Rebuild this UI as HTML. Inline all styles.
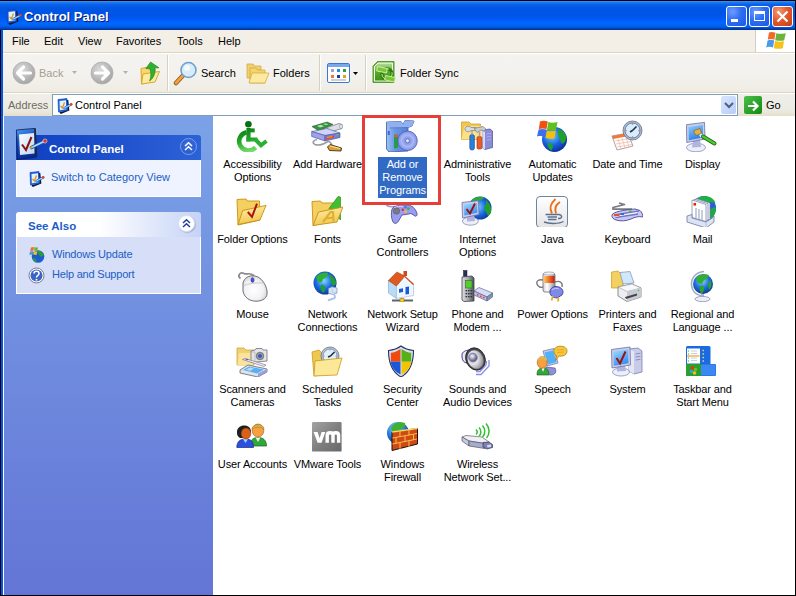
<!DOCTYPE html>
<html><head><meta charset="utf-8">
<style>
*{box-sizing:border-box;margin:0;padding:0}
html,body{width:796px;height:596px;overflow:hidden;background:#000;font-family:"Liberation Sans",sans-serif;font-size:11px;color:#000}
.a{position:absolute}
#title{left:0;top:1px;width:796px;height:29px;background:linear-gradient(to bottom,#3d95ff 0%,#1a78f5 5%,#0a62ea 12%,#0057e3 25%,#0054e5 40%,#0055eb 55%,#005df7 66%,#0266fe 76%,#0062ef 86%,#0052d6 92%,#0040ab 96%,#003092 100%)}
.ttl{left:24px;top:9px;color:#fff;font-weight:bold;font-size:13px;text-shadow:1px 1px 0 #0a1e6e}
.tb{top:6px;width:21px;height:21px;border:1px solid #fff;border-radius:3px;background:radial-gradient(circle at 30% 25%,#6c9cff 0%,#2e6ef3 45%,#1c58e0 100%)}
.tb.cl{background:radial-gradient(circle at 30% 25%,#f29a77 0%,#e25a30 45%,#c83c14 100%)}
#menu{left:3px;top:30px;width:792px;height:22px;background:#f3efe6}
.mi{top:35px}
#tool{left:3px;top:54px;width:792px;height:38px;background:linear-gradient(to bottom,#f5f3f0 0%,#f4f2ee 50%,#eeece2 100%)}
#addr{left:3px;top:94px;width:792px;height:22px;background:linear-gradient(to bottom,#efeee9 0%,#ecebe3 70%,#e6dfcc 100%)}
#side{left:4px;top:116px;width:209px;height:479px;background:linear-gradient(to bottom,#7ba2e7 0%,#6375d6 100%)}
#main{left:213px;top:116px;width:582px;height:479px;background:#fff}
.lbl{position:absolute;width:75px;text-align:center;line-height:13px;font-size:11px;letter-spacing:-0.12px}
.ic{position:absolute;width:32px;height:32px}
</style></head><body>
<div class="a" style="left:1px;top:1px;width:2px;height:594px;background:#0055ea"></div>
<div class="a" style="left:3px;top:116px;width:1px;height:479px;background:#fff"></div>
<div id="title" class="a"></div>
<div class="a ttl">Control Panel</div>
<div class="a tb" style="left:726px"></div>
<div class="a tb" style="left:749px"></div>
<div class="a tb cl" style="left:772px"></div>
<div id="menu" class="a"></div>
<div class="a" style="left:3px;top:52px;width:792px;height:1px;background:#dcd5c2"></div><div class="a" style="left:3px;top:53px;width:792px;height:1px;background:#fff"></div>
<div id="tool" class="a"></div>
<div class="a" style="left:3px;top:92px;width:792px;height:1px;background:#dcd5c2"></div><div class="a" style="left:3px;top:93px;width:792px;height:1px;background:#fff"></div>
<div id="addr" class="a"></div>

<!-- title icon -->
<svg class="a" style="left:5px;top:8px" width="17" height="17" viewBox="0 0 17 17">
<path d="M11.5 3 L12.5 13 L5 16 L4 15" stroke="#101828" stroke-width="1.6" fill="none"/>
<path d="M2 2.5 L11 1.5 L11.5 13.5 L2.5 15 Z" fill="#1a64e0" stroke="#0a3ab0" stroke-width="0.6"/>
<path d="M3.5 4 L10 3.2 L10.2 12.2 L3.8 13.3 Z" fill="#e4f0fc"/>
<path d="M4.5 8.8 L6.3 11 L8.5 5.5" stroke="#d89a10" stroke-width="1.3" fill="none"/>
<path d="M8.5 11 L15 7.5" stroke="#1a50b0" stroke-width="2.4" stroke-linecap="round"/>
<path d="M8.5 11 L15 7.5" stroke="#a8d8ff" stroke-width="1.2" stroke-linecap="round"/>
<circle cx="15.3" cy="7.3" r="1.2" fill="#e04818"/>
</svg>
<!-- title buttons glyphs -->
<div class="a" style="left:731px;top:19px;width:7px;height:3px;background:#fff"></div>
<div class="a" style="left:754px;top:11px;width:11px;height:10px;border:1px solid #fff;border-top:3px solid #fff"></div>
<svg class="a" style="left:776px;top:10px" width="13" height="13" viewBox="0 0 13 13"><path d="M1.5 1.5 L11.5 11.5 M11.5 1.5 L1.5 11.5" stroke="#fff" stroke-width="2.2"/></svg>
<!-- menu -->
<div class="a mi" style="left:12px">File</div>
<div class="a mi" style="left:44px">Edit</div>
<div class="a mi" style="left:78px">View</div>
<div class="a mi" style="left:116px">Favorites</div>
<div class="a mi" style="left:177px">Tools</div>
<div class="a mi" style="left:218px">Help</div>
<div class="a" style="left:755px;top:30px;width:1px;height:22px;background:#d6cfba"></div>
<div class="a" style="left:756px;top:30px;width:39px;height:22px;background:#fff"></div>
<svg class="a" style="left:765px;top:31px" width="22" height="19" viewBox="0 0 22 19">
<path d="M4 1.5 C6 0.5 8 0.8 10.5 1.8 L9.3 8.8 C7 7.8 5 7.7 2.8 8.6 Z" fill="#f26a2a"/>
<path d="M11.3 2.2 C13.5 3 16 3 20.8 2.3 L19.2 9.3 C17 10 14 10 10.2 9.2 Z" fill="#6ab43a"/>
<path d="M2.6 9.4 C5 8.6 7 8.7 9.2 9.6 L8 16.6 C5.8 15.6 3.6 15.5 1.2 16.4 Z" fill="#4a9ae6"/>
<path d="M10 10 C13 11 16 11 19 10.3 L17.8 17.3 C15 18 12.5 18 8.8 17.2 Z" fill="#f6c21a"/>
</svg>
<!-- toolbar -->
<svg class="a" style="left:12px;top:61px" width="24" height="24" viewBox="0 0 24 24">
<defs><radialGradient id="gc" cx="40%" cy="35%" r="65%"><stop offset="0" stop-color="#dcdcdc"/><stop offset="1" stop-color="#a6a6a6"/></radialGradient></defs>
<circle cx="12" cy="12" r="11" fill="url(#gc)" stroke="#b0b0b0" stroke-width="0.8"/>
<path d="M11.5 6 L5.5 12 L11.5 18 M6 12 L18.5 12" stroke="#fff" stroke-width="3.2" fill="none" stroke-linecap="round" stroke-linejoin="round"/>
</svg>
<div class="a" style="left:39px;top:67px;color:#a3a090">Back</div>
<svg class="a" style="left:72px;top:71px" width="6" height="4"><path d="M0 0 L5 0 L2.5 3 Z" fill="#b4b2a8"/></svg>
<svg class="a" style="left:90px;top:61px" width="24" height="24" viewBox="0 0 24 24">
<circle cx="12" cy="12" r="11" fill="url(#gc)" stroke="#b0b0b0" stroke-width="0.8"/>
<path d="M12.5 6 L18.5 12 L12.5 18 M18 12 L5.5 12" stroke="#fff" stroke-width="3.2" fill="none" stroke-linecap="round" stroke-linejoin="round"/>
</svg>
<svg class="a" style="left:123px;top:71px" width="6" height="4"><path d="M0 0 L5 0 L2.5 3 Z" fill="#b4b2a8"/></svg>
<svg class="a" style="left:140px;top:61px" width="21" height="24" viewBox="0 0 21 24">
<path d="M1 7.5 L6 6.5 L8 8 L15 8 L15 20 L1.5 23 Z" fill="#f6d870" stroke="#d8a020" stroke-width="0.9"/>
<path d="M3 13 L19.5 10.5 L15 21 L1.5 23 Z" fill="#fdeaa0" stroke="#d8a020" stroke-width="0.9"/>
<path d="M10.6 1 L19 6.8 L15 7 C15.5 12 14 17 9.5 20 C11 16 11.5 11 9.5 7.4 L5.8 7.6 Z" fill="#30b030" stroke="#1a8a1a" stroke-width="0.6"/>
</svg>
<div class="a" style="left:167px;top:55px;width:1px;height:36px;background:#d7d1c0"></div>
<div class="a" style="left:168px;top:55px;width:1px;height:36px;background:#fff"></div>
<svg class="a" style="left:173px;top:61px" width="25" height="25" viewBox="0 0 25 25">
<line x1="3" y1="22" x2="10" y2="14.5" stroke="#8a5a20" stroke-width="4.5" stroke-linecap="round"/>
<line x1="3" y1="22" x2="10" y2="14.5" stroke="#f0a040" stroke-width="2.8" stroke-linecap="round"/>
<circle cx="15.5" cy="9" r="7.5" fill="#d8ecfa" stroke="#6fa0d0" stroke-width="1.6"/>
<circle cx="14" cy="7" r="3" fill="#fff" opacity="0.7"/>
</svg>
<div class="a" style="left:201px;top:67px">Search</div>
<svg class="a" style="left:246px;top:62px" width="24" height="23" viewBox="0 0 24 23">
<path d="M1 2 L7 2 L8.5 4 L15 4 L15 16 L1 16 Z" fill="#f0d070" stroke="#d0a830" stroke-width="0.7"/>
<path d="M4 6 L10 6 L11.5 8 L19 8 L19 21 L4 21 Z" fill="#f3d470" stroke="#d0a830" stroke-width="0.7"/>
<path d="M6 11 L23 11 L19 21 L3 21 Z" fill="#fde9a0" stroke="#d0a830" stroke-width="0.7"/>
</svg>
<div class="a" style="left:273px;top:67px">Folders</div>
<div class="a" style="left:319px;top:55px;width:1px;height:36px;background:#d7d1c0"></div>
<div class="a" style="left:320px;top:55px;width:1px;height:36px;background:#fff"></div>
<svg class="a" style="left:327px;top:63px" width="24" height="21" viewBox="0 0 24 21">
<rect x="0.5" y="0.5" width="22" height="19" rx="1.5" fill="#fff" stroke="#3a78d8"/>
<rect x="1" y="1" width="21" height="3" fill="#7aa8ec"/>
<rect x="4" y="6" width="3" height="3" fill="#a79ad6"/><rect x="10" y="6" width="3" height="3" fill="#2a8ae8"/><rect x="16" y="6" width="3" height="3" fill="#28a040"/>
<rect x="4" y="12" width="3" height="3" fill="#f07838"/><rect x="10" y="12" width="3" height="3" fill="#1a3ea8"/><rect x="16" y="12" width="3" height="3" fill="#e0a020"/>
<rect x="4" y="16.5" width="15" height="1" fill="#a0a0a0"/>
</svg>
<svg class="a" style="left:353px;top:72px" width="6" height="4"><path d="M0 0 L5 0 L2.5 3 Z" fill="#000"/></svg>
<div class="a" style="left:365px;top:55px;width:1px;height:36px;background:#d7d1c0"></div>
<div class="a" style="left:366px;top:55px;width:1px;height:36px;background:#fff"></div>
<svg class="a" style="left:372px;top:61px" width="24" height="23" viewBox="0 0 24 23">
<defs><linearGradient id="gfs" x1="0" y1="0" x2="0" y2="1"><stop offset="0" stop-color="#b8dca0"/><stop offset="0.5" stop-color="#5aa830"/><stop offset="1" stop-color="#3a9010"/></linearGradient></defs>
<path d="M5.5 0.5 L22 0.5 L22 21.5 L1 21.5 L1 5 Z" fill="#6aae40" stroke="#5a9a30" stroke-width="1"/>
<path d="M6 2 L20.5 2 L20.5 20 L2.5 20 L2.5 5.5 Z" fill="url(#gfs)" stroke="#fff" stroke-width="0.9"/>
<circle cx="15" cy="13" r="5.2" fill="none" stroke="#2a8008" stroke-width="3.2"/>
<circle cx="15" cy="13" r="5.2" fill="none" stroke="#e8f8d8" stroke-width="0.8" stroke-dasharray="6 4"/>
<rect x="5" y="6.5" width="10" height="4.5" fill="#7ac830" stroke="#d8f0c0" stroke-width="0.8" transform="rotate(12 10 8.75)"/>
<rect x="13" y="15.5" width="10" height="4.5" fill="#7ac830" stroke="#d8f0c0" stroke-width="0.8" transform="rotate(12 18 17.75)"/>
</svg>
<div class="a" style="left:400px;top:67px">Folder Sync</div>
<!-- address -->
<div class="a" style="left:8px;top:99px;color:#706d5e">Address</div>
<div class="a" style="left:52px;top:94px;width:686px;height:22px;background:#fff;border:1px solid #7f9db9"></div>
<svg class="a" style="left:56px;top:97px" width="17" height="17" viewBox="0 0 17 17">
<path d="M11.5 3 L12.5 13 L5 16 L4 15" stroke="#101828" stroke-width="1.6" fill="none"/>
<path d="M2 2.5 L11 1.5 L11.5 13.5 L2.5 15 Z" fill="#1a64e0" stroke="#0a3ab0" stroke-width="0.6"/>
<path d="M3.5 4 L10 3.2 L10.2 12.2 L3.8 13.3 Z" fill="#e4f0fc"/>
<path d="M4.5 8.8 L6.3 11 L8.5 5.5" stroke="#d89a10" stroke-width="1.3" fill="none"/>
<path d="M8.5 11 L15 7.5" stroke="#1a50b0" stroke-width="2.4" stroke-linecap="round"/>
<path d="M8.5 11 L15 7.5" stroke="#a8d8ff" stroke-width="1.2" stroke-linecap="round"/>
<circle cx="15.3" cy="7.3" r="1.2" fill="#e04818"/>
</svg>
<div class="a" style="left:75px;top:99px">Control Panel</div>
<div class="a" style="left:721px;top:96px;width:15px;height:18px;border-radius:2px;background:linear-gradient(135deg,#dbe6fd,#b6cdf8)"></div>
<svg class="a" style="left:724px;top:102px" width="10" height="7"><path d="M1 1 L5 5 L9 1" stroke="#4d6185" stroke-width="2" fill="none"/></svg>
<div class="a" style="left:744px;top:96px;width:18px;height:18px;border-radius:2px;background:linear-gradient(135deg,#4cc04c,#108a10)"></div>
<svg class="a" style="left:746px;top:99px" width="14" height="14"><path d="M2 7 L11 7 M7 2.5 L11.5 7 L7 11.5" stroke="#fff" stroke-width="2.2" fill="none"/></svg>
<div class="a" style="left:766px;top:99px">Go</div>
<div id="side" class="a"></div>
<div id="main" class="a"></div>

<div class="a" style="left:16px;top:135px;width:185px;height:25px;border-radius:3px 3px 0 0;background:linear-gradient(to right,#0c3ec0 0%,#1f50cc 50%,#2c62d8 100%)"></div>
<div class="a" style="left:16px;top:160px;width:185px;height:37px;background:#eff3ff;border:1px solid #fff;border-top:0"></div>
<div class="a" style="left:49px;top:143px;color:#fff;font-weight:bold;font-size:11.5px">Control Panel</div>
<div class="a" style="left:180px;top:138px;width:17px;height:17px;border-radius:50%;border:1px solid #7fa0e8;background:radial-gradient(circle at 50% 40%,#3b6ee0,#2456cc)"></div>
<svg class="a" style="left:183px;top:141px" width="11" height="11" viewBox="0 0 11 11"><path d="M2 5 L5.5 1.8 L9 5 M2 9 L5.5 5.8 L9 9" stroke="#fff" stroke-width="1.5" fill="none"/></svg>
<div class="a" style="left:51px;top:171px;color:#215dc6">Switch to Category View</div>

<div class="a" style="left:16px;top:212px;width:185px;height:25px;border-radius:3px 3px 0 0;background:linear-gradient(to right,#fff 0%,#fff 45%,#c6d3f7 100%)"></div>
<div class="a" style="left:16px;top:237px;width:185px;height:57px;background:#d6dff7;border:1px solid #fff;border-top:0"></div>
<div class="a" style="left:28px;top:220px;color:#215dc6;font-weight:bold;font-size:11.5px">See Also</div>
<div class="a" style="left:178px;top:215px;width:17px;height:17px;border-radius:50%;background:#fff;box-shadow:1px 1px 1px #a8b4d8;border:1px solid #d8e0f0"></div>
<svg class="a" style="left:181px;top:218px" width="11" height="11" viewBox="0 0 11 11"><path d="M2 5 L5.5 1.8 L9 5 M2 9 L5.5 5.8 L9 9" stroke="#1c3f9a" stroke-width="1.5" fill="none"/></svg>
<div class="a" style="left:52px;top:248px;color:#215dc6;letter-spacing:-0.2px">Windows Update</div>
<div class="a" style="left:52px;top:268px;color:#215dc6;letter-spacing:-0.2px">Help and Support</div>
<svg class="a" style="left:14px;top:127px" width="34" height="34" viewBox="0 0 34 34"><defs><linearGradient id="gcpf" x1="0" y1="0" x2="0.3" y2="1"><stop offset="0" stop-color="#50a0f0"/><stop offset="0.4" stop-color="#1a58c8"/><stop offset="1" stop-color="#0a2a90"/></linearGradient>
<linearGradient id="gcpi" x1="0" y1="0" x2="1" y2="1"><stop offset="0" stop-color="#ffffff"/><stop offset="1" stop-color="#b8d4f4"/></linearGradient></defs>
<path d="M2.4 3 L21 1.4 L22.5 30 L3.5 32.5 Z" fill="url(#gcpf)" stroke="#0a1a50" stroke-width="0.8"/>
<path d="M21 1.4 L22.5 30" stroke="#202838" stroke-width="1.6"/>
<path d="M5 7.5 L20 6 L20.5 26.5 L6 28 Z" fill="url(#gcpi)"/>
<path d="M8 17.5 L12 23 L17.5 10" stroke="#8a1010" stroke-width="2" fill="none"/>
<path d="M17.5 20.5 L30 14.5" stroke="#1a50b0" stroke-width="3.6" stroke-linecap="round"/>
<path d="M17.5 20.5 L30 14.5" stroke="#b0dcff" stroke-width="1.8" stroke-linecap="round"/>
<path d="M16 21.5 L18.5 19" stroke="#d8a020" stroke-width="1.5"/>
<circle cx="31" cy="14" r="2.1" fill="#e83010" stroke="#fff" stroke-width="0.5"/>
</svg>
<svg class="a" style="left:28px;top:170px" width="17" height="17" viewBox="0 0 17 17"><path d="M11.5 3 L12.5 13 L5 16 L4 15" stroke="#101828" stroke-width="1.6" fill="none"/>
<path d="M2 2.5 L11 1.5 L11.5 13.5 L2.5 15 Z" fill="#1a64e0" stroke="#0a3ab0" stroke-width="0.6"/>
<path d="M3.5 4 L10 3.2 L10.2 12.2 L3.8 13.3 Z" fill="#e4f0fc"/>
<path d="M4.5 8.8 L6.3 11 L8.5 5.5" stroke="#d89a10" stroke-width="1.3" fill="none"/>
<path d="M8.5 11 L15 7.5" stroke="#1a50b0" stroke-width="2.4" stroke-linecap="round"/>
<path d="M8.5 11 L15 7.5" stroke="#a8d8ff" stroke-width="1.2" stroke-linecap="round"/>
<circle cx="15.3" cy="7.3" r="1.2" fill="#e04818"/></svg>
<svg class="a" style="left:28px;top:246px" width="17" height="17" viewBox="0 0 17 17"><circle cx="10" cy="10.5" r="6.3" fill="#1c5cd0"/>
<path d="M9 5 C12 4 15 6 16 9 L13 11 L11 9 Z" fill="#2a9a3a"/>
<path d="M5 12 C7 11 8 13 9 16 C6 16 5 14 5 12 Z" fill="#2a9a3a"/>
<path d="M3 1.5 L6 1 L5.5 4.5 L2.2 5 Z" fill="#f26a2a"/>
<path d="M6.5 1.2 L10 1.6 L9.3 5 L6 4.6 Z" fill="#6ab43a"/>
<path d="M2 5.5 L5.3 5 L4.8 8.6 L1.3 9 Z" fill="#4a9ae6"/>
<path d="M5.8 5.2 L9.2 5.6 L8.6 9 L5.2 8.6 Z" fill="#f6c21a"/>
</svg>
<svg class="a" style="left:28px;top:267px" width="17" height="17" viewBox="0 0 17 17"><circle cx="8.5" cy="8.5" r="7.5" fill="#fff" stroke="#7a7a88" stroke-width="1"/>
<circle cx="8.5" cy="8.5" r="6" fill="#3a64c8"/>
<path d="M6 6.5 C6 3.5 11 3.5 11 6.5 C11 8.5 8.5 8.5 8.5 10.5" stroke="#fff" stroke-width="1.6" fill="none"/>
<circle cx="8.5" cy="12.8" r="1" fill="#fff"/>
</svg>
<svg class="a" style="left:236px;top:120px" width="32" height="32" viewBox="0 0 32 32"><defs><linearGradient id="gacc" gradientUnits="userSpaceOnUse" x1="8" y1="6" x2="14" y2="32"><stop offset="0" stop-color="#08780f"/><stop offset="0.55" stop-color="#22a82a"/><stop offset="1" stop-color="#78e070"/></linearGradient></defs>
<g fill="url(#gacc)">
<circle cx="12.4" cy="4.2" r="3.3" fill="#08700e"/>
<rect x="10.4" y="8" width="4.2" height="13.5"/>
<rect x="14" y="8.4" width="4.7" height="4"/>
<rect x="10.4" y="17.5" width="11" height="4"/>
</g>
<path d="M19.5 19.5 L25 25.3 L30.5 21" stroke="#2ab030" stroke-width="4" fill="none" stroke-linejoin="miter"/>
<path d="M10.5 12.2 A9.3 9.3 0 1 0 19.5 27.4" stroke="url(#gacc)" stroke-width="4.6" fill="none"/>
</svg>
<div class="lbl" style="left:215px;top:158px">Accessibility<br>Options</div>
<svg class="a" style="left:311px;top:120px" width="32" height="32" viewBox="0 0 32 32"><path d="M1 6.5 L16 2 L22 4.5 L8 11 Z" fill="#2a9a38" stroke="#3a4a3a" stroke-width="0.6"/>
<path d="M6 6 L10 4.8 L13 6.3 L9 7.6 Z" fill="#c8dcc8"/><path d="M12 4 L15 3.2 L17.5 4.4 L14.5 5.3 Z" fill="#a8d0a8"/>
<path d="M16 7.5 L28 3.5 L31 4.5 L31 8.5 L19 12 Z" fill="#dcdfe6" stroke="#6a7080" stroke-width="0.7"/>
<ellipse cx="30" cy="6.5" rx="1.3" ry="2.3" fill="#f0f2f6" stroke="#6a7080" stroke-width="0.5"/>
<path d="M0.7 11.5 L16 8.5 L29 13 L14 15.5 Z" fill="#d0d4fa" stroke="#50548a" stroke-width="0.6"/>
<path d="M0.7 11.5 L14 15.5 L14 21 L0.7 16.5 Z" fill="#9ca2ec" stroke="#4a4e90" stroke-width="0.6"/>
<path d="M14 15.5 L29 13 L29 17.5 L14 21 Z" fill="#7880d8" stroke="#4a4e90" stroke-width="0.6"/>
<path d="M15 17.2 L23 15.6 L23 17.8 L15 19.4 Z" fill="#e84a28"/>
<path d="M16 17.6 L21 16.6" stroke="#f8c030" stroke-width="0.7"/>
<path d="M25 15 L27.5 14.5" stroke="#50d050" stroke-width="1.2"/>
<path d="M6 19.5 C2 20 1 23 4 24.5 C8 26 13 24 17 21.5 C19 21 20 23 21 25" stroke="#9a9aa2" stroke-width="1.6" fill="none"/>
<path d="M16.5 27 L19 24.5 L30.5 28 L30 31 L18.5 30.5 Z" fill="#e0a030" stroke="#40301a" stroke-width="0.9"/>
<path d="M19 26 L29 28.5" stroke="#f8e0a0" stroke-width="1"/>
</svg>
<div class="lbl" style="left:290px;top:158px">Add Hardware</div>
<svg class="a" style="left:386px;top:120px" width="32" height="32" viewBox="0 0 32 32"><defs><radialGradient id="gcd" cx="50%" cy="50%" r="50%"><stop offset="0" stop-color="#c8d4fc"/><stop offset="0.3" stop-color="#8898e8"/><stop offset="0.6" stop-color="#a8b8f8"/><stop offset="1" stop-color="#8090e0"/></radialGradient>
<linearGradient id="gbx" x1="0" y1="0" x2="1" y2="0"><stop offset="0" stop-color="#a0c0f4"/><stop offset="0.3" stop-color="#6a98e4"/><stop offset="1" stop-color="#4a78d0"/></linearGradient></defs>
<path d="M0.5 2 L15 1.5 L17 4.5 L19 0.5 L28 1 L26 6 L22 7.5 L22 31 L3 32 L0.5 29 Z" fill="url(#gbx)" stroke="#3a58a8" stroke-width="0.8"/>
<path d="M0.5 2 L15 1.5 L17 4.5 L19 0.5 L28 1 L26 6 L22 7.5 L4 8 Z" fill="#90b0f0"/>
<path d="M4 8 L22 7.5" stroke="#5070c0" stroke-width="0.8"/>
<rect x="1.8" y="11" width="2" height="4" fill="#3a68e0"/>
<path d="M8 17 L12 16.5 L12 28 L8 28.5 Z" fill="#2a9a4a"/><path d="M8 14.5 L12 14 L12 16.5 L8 17 Z" fill="#c86050"/>
<circle cx="21.5" cy="20.8" r="9.8" fill="url(#gcd)" stroke="#4a5ab8" stroke-width="0.8"/>
<circle cx="21.5" cy="20.8" r="2" fill="#e0e8ff" stroke="#5a68c0" stroke-width="0.9"/>
</svg>
<div class="lbl" style="left:365px;top:157px;width:75px"><span style="display:inline-block;background:#316ac5;color:#fff;padding:1px 1px 1px 1px">Add or<br>Remove<br>Programs</span></div>
<svg class="a" style="left:461px;top:120px" width="32" height="32" viewBox="0 0 32 32"><path d="M0.5 2 L8 2 L10 4 L19.5 4 L19.5 19.5 L0.5 19.5 Z" fill="#f0c850" stroke="#c89a20" stroke-width="0.7"/>
<path d="M3.5 6 L22 6 L20 19.5 L0.5 19.5 Z" fill="#fde08a"/>
<path d="M22 10 L29 9 L31.5 11 L31.5 27.5 L24 29.5 L21.5 28 Z" fill="#8a8cd8" stroke="#484a98" stroke-width="0.7"/>
<path d="M21.5 10.5 L24 12 L24 29.5 L21.5 28 Z" fill="#d8d8f4"/>
<path d="M25.5 14 L30 13.5 M25.5 17 L30 16.5 M25.5 20 L30 19.5" stroke="#b0b2e8" stroke-width="0.9"/>
<circle cx="29.5" cy="26.5" r="0.6" fill="#40d040"/>
<path d="M4 9 C4 6 8 5.5 10 7.5 L15 7.5 L15 10.5 L10 10.5 C8 12.5 4 12 4 9 Z" fill="#d8dce0" stroke="#6a6e78" stroke-width="0.6"/>
<path d="M13 8.5 L22 6.5 L25 9 L23 11 L20 10 L16 12.5 Z" fill="#c8ccd4" stroke="#6a6e78" stroke-width="0.6"/>
<rect x="8.8" y="14.5" width="4.6" height="15.5" rx="2" fill="#2a80e0" stroke="#14407a" stroke-width="0.6"/>
<path d="M11 10.5 L11 14.5" stroke="#a0a4ac" stroke-width="1.5"/>
<rect x="16" y="16.5" width="4.8" height="12.5" rx="1.5" fill="#f05a20" stroke="#8a2a10" stroke-width="0.6"/>
<path d="M18.5 11.5 L18.5 16.5" stroke="#a0a4ac" stroke-width="1.5"/>
</svg>
<div class="lbl" style="left:440px;top:158px">Administrative<br>Tools</div>
<svg class="a" style="left:536px;top:120px" width="32" height="32" viewBox="0 0 32 32"><defs><radialGradient id="gau" cx="40%" cy="35%" r="70%"><stop offset="0" stop-color="#70d0ff"/><stop offset="0.55" stop-color="#1a60e0"/><stop offset="1" stop-color="#0a2a90"/></radialGradient></defs>
<circle cx="18.5" cy="19.5" r="12.5" fill="url(#gau)"/>
<path d="M22 9 C26 9.5 29.5 13 30.5 17 L29 22 L26 24 L24 20 L22 15 Z" fill="#20a030"/>
<path d="M12 23 C15 22 17 24 17 27 L15.5 30.5 C13 29 11 26.5 12 23 Z" fill="#20a030"/>
<path d="M4 1.5 C6.5 0.5 9 0.8 11.8 1.5 L10.5 9 C7.8 8.3 5.5 8.2 2.8 9 Z" fill="#f05010"/>
<path d="M12.3 2 C15 3 18 3 21.5 2 L20 10 C17 11 14.5 11 11 10 Z" fill="#60c020"/>
<path d="M2.6 9.6 C5.3 8.8 7.6 8.9 10.3 9.6 L9 16.8 C6.3 16 4 15.8 1 16.6 Z" fill="#3a70f0"/>
<path d="M10.8 10.4 C14 11.5 17 11.5 19.8 10.6 L18.5 18.2 C15.5 19 13 19 9.5 18 Z" fill="#f4c010"/>
</svg>
<div class="lbl" style="left:515px;top:158px">Automatic<br>Updates</div>
<svg class="a" style="left:611px;top:120px" width="32" height="32" viewBox="0 0 32 32"><path d="M1 16 L17 13 L22 26 L6 30 Z" fill="#fff" stroke="#909098" stroke-width="0.8"/>
<path d="M1 16 L17 13 L18 16 L2 19 Z" fill="#f07838"/>
<g stroke="#f0a890" stroke-width="0.6"><path d="M4 21 L19 18.5 M5 24 L20 21.5 M6 27 L21 24.5 M7 19 L10 29 M11 18 L14 28 M15 17.5 L18 27"/></g>
<circle cx="21.5" cy="10.5" r="9.5" fill="#b8bcc8" stroke="#6a6e78" stroke-width="0.8"/>
<circle cx="21.5" cy="10.5" r="7.5" fill="#d8ecfc" stroke="#3a70b8" stroke-width="0.8"/>
<path d="M21.5 10.5 L25.5 6.5 M21.5 10.5 L19 12" stroke="#203040" stroke-width="1.6"/>
<circle cx="21.5" cy="4" r="0.7" fill="#f06030"/><circle cx="28" cy="10.5" r="0.7" fill="#f06030"/><circle cx="21.5" cy="17" r="0.7" fill="#f06030"/><circle cx="15" cy="10.5" r="0.7" fill="#f06030"/>
</svg>
<div class="lbl" style="left:590px;top:158px">Date and Time</div>
<svg class="a" style="left:686px;top:120px" width="32" height="32" viewBox="0 0 32 32"><defs><linearGradient id="gds" x1="0" y1="0" x2="0.4" y2="1"><stop offset="0" stop-color="#90d0ff"/><stop offset="1" stop-color="#2a80e8"/></linearGradient></defs>
<ellipse cx="10" cy="27.5" rx="9.5" ry="4.3" fill="#eceef8" stroke="#7a80b0" stroke-width="0.7"/>
<path d="M7 21 L14 20 L15 27 L6 27.5 Z" fill="#b0b4e0"/>
<path d="M0.4 4.7 L18.5 2.4 L19 19 L0.8 22.5 Z" fill="#c8cce8" stroke="#6a70a8" stroke-width="0.8"/>
<path d="M2.5 7 L16.8 5 L17 17.5 L2.8 20.2 Z" fill="url(#gds)"/>
<path d="M7.4 11 L14 8.4 L15.5 13.5 L10 15.5 Z" fill="#e8b040" stroke="#8a5a18" stroke-width="0.6"/>
<path d="M13 15 L16 13.5 L17.5 16.5 L14.5 17.5 Z" fill="#e8f0ff"/>
<path d="M17 16.5 L28.5 23.5" stroke="#186a10" stroke-width="4" stroke-linecap="round"/>
<path d="M17 16.5 L28.5 23.5" stroke="#50c830" stroke-width="2.4" stroke-linecap="round"/>
</svg>
<div class="lbl" style="left:665px;top:158px">Display</div>
<svg class="a" style="left:236px;top:195px" width="32" height="32" viewBox="0 0 32 32"><defs><linearGradient id="gfo" x1="0" y1="0" x2="0.3" y2="1"><stop offset="0" stop-color="#fff0b0"/><stop offset="1" stop-color="#f0c850"/></linearGradient></defs>
<path d="M1 4.5 L10 4 L11.5 6 L23.5 6 L24 25 L2 30 Z" fill="#f4d060" stroke="#c89010" stroke-width="0.9"/>
<path d="M6.7 15.5 L30 10.4 L24 25 L2 29.5 Z" fill="url(#gfo)" stroke="#c89010" stroke-width="0.9"/>
<path d="M11.8 17 L16 21.8 L21 8.7" stroke="#b01010" stroke-width="2" fill="none"/>
</svg>
<div class="lbl" style="left:215px;top:233px">Folder Options</div>
<svg class="a" style="left:311px;top:195px" width="32" height="32" viewBox="0 0 32 32"><defs><linearGradient id="gfn" x1="0" y1="0" x2="0.3" y2="1"><stop offset="0" stop-color="#fff0b0"/><stop offset="1" stop-color="#f0c850"/></linearGradient></defs>
<path d="M1 6.5 L9.5 6 L11 8 L22 8 L22 26 L2 30.5 Z" fill="#f4d060" stroke="#c89010" stroke-width="0.9"/>
<path d="M18 13.5 L27 1.5 L29.5 2 L29.5 25 Z" fill="#40c030" stroke="#208018" stroke-width="0.6"/>
<path d="M7.5 17 L32 12 L26 27 L2 30.5 Z" fill="url(#gfn)" stroke="#c89010" stroke-width="0.9"/>
<path d="M12 27 L19.5 17 L22 17 L22.5 26.5 M15.5 23.5 L22 22.5" stroke="#e0b030" stroke-width="2.2" fill="none"/>
</svg>
<div class="lbl" style="left:290px;top:233px">Fonts</div>
<svg class="a" style="left:386px;top:195px" width="32" height="32" viewBox="0 0 32 32"><path d="M0 10 C3 12 6 12 9 11.5" stroke="#9a9cd0" stroke-width="1.6" fill="none"/>
<path d="M6 14 C8 10.5 14 10 20 10 C25 10 28 12 30 16 C32 19 31 22 29 21 L25 18.5 C22 19 19 20 16 20 L12.5 26 C11 29 8 29 7 27 C5 23 5 18 6 14 Z" fill="#9a9cf2" stroke="#40428a" stroke-width="0.8"/>
<path d="M8 13 C11 11 15 11 17 11.5" stroke="#d8d8ff" stroke-width="1" fill="none"/>
<circle cx="10.5" cy="16" r="3.2" fill="#7a7a84" stroke="#50505a" stroke-width="0.5"/>
<circle cx="16.8" cy="14.8" r="1.3" fill="#e83020"/><circle cx="19.5" cy="12.2" r="1.3" fill="#3080f0"/><circle cx="22.3" cy="13.6" r="1.3" fill="#40b030"/><circle cx="19.6" cy="16.6" r="1.3" fill="#f0c020"/>
</svg>
<div class="lbl" style="left:365px;top:233px">Game<br>Controllers</div>
<svg class="a" style="left:461px;top:195px" width="32" height="32" viewBox="0 0 32 32"><defs><radialGradient id="gin" cx="40%" cy="45%" r="65%"><stop offset="0" stop-color="#80d0ff"/><stop offset="0.55" stop-color="#1a68e0"/><stop offset="1" stop-color="#0a3090"/></radialGradient>
<linearGradient id="gis" x1="0" y1="0" x2="0.4" y2="1"><stop offset="0" stop-color="#a0dcff"/><stop offset="1" stop-color="#3a90f0"/></linearGradient></defs>
<circle cx="19" cy="13" r="11.5" fill="url(#gin)"/>
<path d="M10 6 C13 2 19 1 24 2.5 C22 4 20 5 17 6 Z" fill="#30a830"/>
<path d="M25 5 C29 8 31 13 30 18 L27 21 L25 17 L23 13 L25 9 Z" fill="#20a030"/>
<ellipse cx="9.4" cy="26.2" rx="8" ry="4" fill="#eceef8" stroke="#7a80b0" stroke-width="0.7"/>
<path d="M6 20 L13 19 L14 26 L6 26.5 Z" fill="#b0b4e0"/>
<path d="M1 7.4 L17.5 5.7 L18 19.5 L1.5 23 Z" fill="#c8cce8" stroke="#6a70a8" stroke-width="0.8"/>
<path d="M3 9.5 L16 8 L16.3 17.8 L3.3 20.5 Z" fill="url(#gis)"/>
<path d="M5.5 14 L9 18.5 L14 8.5" stroke="#a01010" stroke-width="1.9" fill="none"/>
</svg>
<div class="lbl" style="left:440px;top:233px">Internet<br>Options</div>
<svg class="a" style="left:536px;top:195px" width="32" height="32" viewBox="0 0 32 32"><defs><linearGradient id="gjv" x1="0" y1="0" x2="0" y2="1"><stop offset="0" stop-color="#ffffff"/><stop offset="0.5" stop-color="#f2f2f2"/><stop offset="1" stop-color="#e4e4e4"/></linearGradient></defs>
<rect x="0.5" y="1.5" width="31" height="31" rx="3.5" fill="url(#gjv)" stroke="#5a7898" stroke-width="0.9"/>
<path d="M19.5 4 C14 9 13 13 16 18.5 M24 7 C19 10 18.5 14 20 18.5" stroke="#e87018" stroke-width="1.9" fill="none"/>
<path d="M9.5 19.5 L22.5 19.5 C27 19.5 26.5 24 22 23.5 M11.5 22 L21 22 M12 24.5 L20.5 24.5 M8 27 C13 29 23 29 27.5 26.5" stroke="#5a7090" stroke-width="1.4" fill="none"/>
</svg>
<div class="lbl" style="left:515px;top:233px">Java</div>
<svg class="a" style="left:611px;top:195px" width="32" height="32" viewBox="0 0 32 32"><path d="M8 8 L13.5 9.5 L2 12.5 L2 14.2 L21 14.2" stroke="#7a7a84" stroke-width="1.7" fill="none" stroke-linejoin="round"/>
<path d="M1 20 C2 17 12 15 24 14 L29 15.5 C31 17 32 20 31.5 22 C28 21 24 22 20 24 C15 26 10 26.5 5 25 C2 24 0.5 22 1 20 Z" fill="#c8c8f6" stroke="#48488a" stroke-width="0.9"/>
<path d="M3.5 20 L28 16 M4.5 22.5 L27 19" stroke="#7474c4" stroke-width="1.3"/>
<path d="M5 21.2 L26 17.6" stroke="#ffffff" stroke-width="0.9"/>
<rect x="3" y="19" width="5.5" height="2" fill="#e85030"/><rect x="9.5" y="18" width="3.5" height="2" fill="#2a70e0"/><rect x="18" y="15.5" width="2.5" height="2" fill="#30c030"/>
</svg>
<div class="lbl" style="left:590px;top:233px">Keyboard</div>
<svg class="a" style="left:686px;top:195px" width="32" height="32" viewBox="0 0 32 32"><circle cx="18" cy="13" r="12" fill="#2a5ed8"/>
<path d="M8 6 C11 1.5 17 0.5 22 1.5 C26 2.5 28.5 5 29.5 8 C24 7 16 6 8 6 Z" fill="#20b040"/>
<path d="M22 16 C26 13 29 11 30 13 C30 19 27 23 24 25 Z" fill="#20a848"/>
<path d="M10 3.5 L24 8 L24 25 L10 21 Z" fill="#f4f6fc" stroke="#7080a8" stroke-width="0.7"/>
<path d="M8 4.2 L22 8.7 L22 25.7 L8 21.7 Z" fill="#f8f9fe" stroke="#7080a8" stroke-width="0.7"/>
<path d="M6 5 L20 9.5 L20 26.5 L6 22.5 Z" fill="#fff" stroke="#7080a8" stroke-width="0.7"/>
<rect x="7.5" y="8" width="2.6" height="2.6" fill="#f02000"/>
<path d="M10 13 L10 23 M13 14 L13 24 M16 15 L16 25" stroke="#8090b8" stroke-width="0.9"/>
<path d="M1 21 L6 19.5 L6 23 L20 27 L27 22.5 L28 21 L28 27 L20 33 L1 27 Z" fill="#dce4f4" stroke="#6a78a8" stroke-width="0.8"/>
<path d="M20 27 L20 33" stroke="#9aa8c8" stroke-width="0.6"/>
</svg>
<div class="lbl" style="left:665px;top:233px">Mail</div>
<svg class="a" style="left:236px;top:270px" width="32" height="32" viewBox="0 0 32 32"><defs><radialGradient id="gms" cx="45%" cy="55%" r="65%"><stop offset="0" stop-color="#ffffff"/><stop offset="0.6" stop-color="#f2f2f4"/><stop offset="1" stop-color="#c8c8d0"/></radialGradient></defs>
<path d="M4.5 8.5 C1 6 4 1.5 8 3.5 C11 5 13 2 18 5.5" stroke="#8a8a92" stroke-width="1.7" fill="none"/>
<path d="M7 13 C8 8 13 5 19 6 C25 7 30 14 31 21 C32 28 27 31.2 20 31.2 C13 31.2 8 27 7 21 Z" fill="url(#gms)" stroke="#606068" stroke-width="0.9"/>
<path d="M7.5 16 C12 13.5 20 12.5 28.5 13" stroke="#b8b8c0" stroke-width="0.7" fill="none"/>
<ellipse cx="16.5" cy="10" rx="1.7" ry="2.5" fill="#4a50d8" stroke="#30308a" stroke-width="0.4"/>
</svg>
<div class="lbl" style="left:215px;top:308px">Mouse</div>
<svg class="a" style="left:311px;top:270px" width="32" height="32" viewBox="0 0 32 32"><defs><radialGradient id="gnc" cx="45%" cy="40%" r="65%"><stop offset="0" stop-color="#80d8ff"/><stop offset="0.55" stop-color="#1a68e0"/><stop offset="1" stop-color="#0a3090"/></radialGradient></defs>
<circle cx="14" cy="13" r="11.5" fill="url(#gnc)"/>
<path d="M5 7 C8 3 13 2 17 3 L16 7 L12 9 L11 12 L7 12 Z" fill="#30b030"/>
<path d="M18 4 C22 6 25 10 25.5 14 L22 16 L20 12 Z" fill="#20a030"/>
<path d="M10 15 C13 14 15 17 14 21 L12 23 C10 21 9 18 10 15 Z" fill="#20a030"/>
<path d="M17.5 18.5 L21 16.8 L26 18 L26 23 L22.5 24.5 L17.5 23.5 Z" fill="#d8e4f8" stroke="#7a90b8" stroke-width="0.7"/>
<path d="M21 16.8 L21 22 L26 23" stroke="#a8b8d8" stroke-width="0.6" fill="none"/>
<path d="M23 24.5 C25 27 24 28.5 21 29 C19 29.3 18 30 17 30.5" stroke="#a8c4f0" stroke-width="2" fill="none"/>
</svg>
<div class="lbl" style="left:290px;top:308px">Network<br>Connections</div>
<svg class="a" style="left:386px;top:270px" width="32" height="32" viewBox="0 0 32 32"><path d="M6 30.5 L27 30.5" stroke="#606468" stroke-width="2"/>
<path d="M15.5 26 L15.5 29" stroke="#909498" stroke-width="1"/>
<rect x="14" y="28.5" width="4" height="3.5" fill="#f4cc20" stroke="#907010" stroke-width="0.5"/>
<path d="M2.4 10.4 L10.4 16 L10.4 28.5 L2.5 23 Z" fill="#b8dcf8" stroke="#7090b8" stroke-width="0.5"/>
<path d="M10.4 16 L19 6 L27.5 14 L27.5 25.5 L10.4 28.5 Z" fill="#eef6ff" stroke="#90a8c8" stroke-width="0.5"/>
<path d="M2.4 10.4 L10.8 2 L19 6 L10.4 16 Z" fill="#e05a20" stroke="#a03810" stroke-width="0.5"/>
<path d="M19 6 L28 14 L27 15 L19 7.5 Z" fill="#d84818"/>
<rect x="17.5" y="1" width="3.5" height="5" fill="#d04818"/>
<path d="M13 19 L17 18.3 L17 22 L13 22.7 Z" fill="#1a5ad8"/>
<path d="M19.5 17 L23 16.5 L23 24 L19.5 24.5 Z" fill="#1a5ad8"/>
</svg>
<div class="lbl" style="left:365px;top:308px">Network Setup<br>Wizard</div>
<svg class="a" style="left:461px;top:270px" width="32" height="32" viewBox="0 0 32 32"><defs><linearGradient id="gph" x1="0" y1="0" x2="1" y2="0"><stop offset="0" stop-color="#e0e0e4"/><stop offset="0.5" stop-color="#a8a8b0"/><stop offset="1" stop-color="#505058"/></linearGradient></defs>
<rect x="2.5" y="0.5" width="3.5" height="6" fill="#283058" stroke="#181830" stroke-width="0.5"/>
<path d="M1 7 L11 6 L13 8 L13 31 L3 31.5 L1 30 Z" fill="url(#gph)" stroke="#404048" stroke-width="0.8"/>
<rect x="4.5" y="10.5" width="6.5" height="7.5" fill="#50d030" stroke="#285818" stroke-width="0.5"/>
<g fill="#303038"><rect x="4.5" y="20" width="1.6" height="1.3"/><rect x="7" y="20" width="1.6" height="1.3"/><rect x="9.5" y="20" width="1.6" height="1.3"/><rect x="4.5" y="23" width="1.6" height="1.3"/><rect x="7" y="23" width="1.6" height="1.3"/><rect x="9.5" y="23" width="1.6" height="1.3"/><rect x="4.5" y="26" width="1.6" height="1.3"/><rect x="7" y="26" width="1.6" height="1.3"/><rect x="9.5" y="26" width="1.6" height="1.3"/></g>
<path d="M13 21 L18 17.5 L31.5 23 L26 27 Z" fill="#d8dcf8" stroke="#50527a" stroke-width="0.6"/>
<path d="M13 21 L26 27 L26 31 L13 25 Z" fill="#b8bcf0" stroke="#50527a" stroke-width="0.6"/>
<path d="M26 27 L31.5 23 L31.5 27 L26 31 Z" fill="#8a8ed0" stroke="#50527a" stroke-width="0.6"/>
<path d="M16 24.5 L17.5 25.2 M19 26 L20.5 26.7 M22 27.2 L23.5 27.9" stroke="#f05020" stroke-width="1.6"/>
<path d="M27.5 27 L30 25" stroke="#40c040" stroke-width="1.4"/>
</svg>
<div class="lbl" style="left:440px;top:308px">Phone and<br>Modem ...</div>
<svg class="a" style="left:536px;top:270px" width="32" height="32" viewBox="0 0 32 32"><defs><linearGradient id="gpw" x1="0" y1="0" x2="1" y2="0"><stop offset="0" stop-color="#d0d0d8"/><stop offset="0.35" stop-color="#ffffff"/><stop offset="1" stop-color="#909098"/></linearGradient>
<linearGradient id="gpr" x1="0" y1="0" x2="1" y2="0"><stop offset="0" stop-color="#f8d070"/><stop offset="0.5" stop-color="#f07020"/><stop offset="1" stop-color="#c02010"/></linearGradient></defs>
<path d="M7 10 C3 9 0 11 1 14 C2 17 5 18 7 17" stroke="#7a7a80" stroke-width="1.4" fill="none"/>
<rect x="7" y="3" width="12" height="19" rx="2" fill="url(#gpw)" stroke="#6a6a78" stroke-width="0.8"/>
<ellipse cx="13" cy="3.5" rx="5.5" ry="1.6" fill="#f0f0f4" stroke="#8a8a98" stroke-width="0.6"/>
<rect x="7.4" y="6" width="11.2" height="7" fill="url(#gpr)"/>
<path d="M19 12 C24 10 27 13 26 17" stroke="#7a7a80" stroke-width="1.4" fill="none"/>
<path d="M14 21 C15 17 19 15.5 23 17 C27 18.5 28 22 26 25 L21 28 C17 28 13 25 14 21 Z" fill="#8088e8" stroke="#30348a" stroke-width="0.8"/>
<path d="M16 20 C18 18 21 18 23 19" stroke="#c8ccff" stroke-width="1" fill="none"/>
<path d="M17 26 L15.5 30.5 M22.5 27.5 L22 31.5" stroke="#e0b020" stroke-width="1.8"/>
</svg>
<div class="lbl" style="left:515px;top:308px">Power Options</div>
<svg class="a" style="left:611px;top:270px" width="32" height="32" viewBox="0 0 32 32"><path d="M0.5 2 L7 1 L9 3 L12 3 L12 18 L0.5 18 Z" fill="#f4d060" stroke="#c89a20" stroke-width="0.7"/>
<path d="M9 2.5 L19 1.5 L23 13 L12 14 Z" fill="#d0e8fc" stroke="#7a90b0" stroke-width="0.7"/>
<path d="M7 17 L21 14 L30 18 L30 27 L16 31.5 L7 26 Z" fill="#eceef0" stroke="#707478" stroke-width="0.8"/>
<path d="M7 17 L21 14 L30 18 L16 21.5 Z" fill="#f8f8fa" stroke="#8a8e94" stroke-width="0.5"/>
<path d="M16 21.5 L30 18 L30 27 L16 31.5 Z" fill="#c8ccd2"/>
<path d="M14 27 L26 23.5 L26 25.5 L15 29 Z" fill="#404448"/>
<circle cx="27.5" cy="20.5" r="0.7" fill="#40c040"/>
</svg>
<div class="lbl" style="left:590px;top:308px">Printers and<br>Faxes</div>
<svg class="a" style="left:686px;top:270px" width="32" height="32" viewBox="0 0 32 32"><defs><radialGradient id="grg" cx="45%" cy="35%" r="65%"><stop offset="0" stop-color="#90d8ff"/><stop offset="0.55" stop-color="#2070d8"/><stop offset="1" stop-color="#0a3a98"/></radialGradient></defs>
<path d="M18 1.5 C10 2 5 8 5.5 15 C6 21 10 25 16 26" stroke="#a8a8c0" stroke-width="1.6" fill="none"/>
<circle cx="17" cy="14" r="10" fill="url(#grg)"/>
<path d="M10 8 C13 4 19 3.5 23 5 L21 9 L18 10 L16 14 L12 13 Z" fill="#30b030"/>
<path d="M14 16 C17 15 19 17 18 20 L16 24 C14 22 13 19 14 16 Z" fill="#30a030"/>
<path d="M24 10 C26 13 26 17 23 20 L22 15 Z" fill="#30a030"/>
<rect x="15" y="24" width="3" height="3.5" fill="#b0b4c8"/>
<ellipse cx="16.5" cy="29" rx="7.5" ry="2.6" fill="#eceef8" stroke="#8a90b8" stroke-width="0.8"/>
</svg>
<div class="lbl" style="left:665px;top:308px">Regional and<br>Language ...</div>
<svg class="a" style="left:236px;top:345px" width="32" height="32" viewBox="0 0 32 32"><path d="M1 3 L8 3 L10 5 L18 5 L18 20 L1 20 Z" fill="#f0d070" stroke="#c8a030" stroke-width="0.7"/>
<path d="M3 8 L17 8 L17 20 L1.5 20 Z" fill="#fbe49a"/>
<path d="M15 6 L19 5 L20 3.5 L26 3.5 L27 5 L31 5 L31 16 L15 17.5 Z" fill="#e4e4e8" stroke="#707078" stroke-width="0.8"/>
<path d="M16 7 L19 7 L19 16" stroke="#a8a8b0" stroke-width="0.6" fill="none"/>
<circle cx="24" cy="11" r="3.8" fill="#9a9aa0" stroke="#505058" stroke-width="0.6"/>
<circle cx="24" cy="11" r="2" fill="#2a60b8"/>
<path d="M6.5 14.5 L9 13.5 L30 20 L28 21.5 Z" fill="#f4f4f8" stroke="#7a7a90" stroke-width="0.7"/>
<ellipse cx="11" cy="14.5" rx="1.6" ry="0.7" fill="#5a60d8"/>
<path d="M4 25 L12 20 L31 24 L31 27 L22 32 L4 28 Z" fill="#e0e2ea" stroke="#60646c" stroke-width="0.8"/>
<path d="M7 25 L13 21.5 L28 24.5 L21 28.5 Z" fill="#58b0f0"/>
<path d="M10 24.5 L14 22.5 L18 23.5 L14 26 Z" fill="#d8f0ff" opacity="0.7"/>
<path d="M22 28.5 L31 24 L31 27 L22 32 Z" fill="#9a9ee0"/>
</svg>
<div class="lbl" style="left:215px;top:383px">Scanners and<br>Cameras</div>
<svg class="a" style="left:311px;top:345px" width="32" height="32" viewBox="0 0 32 32"><path d="M1 7 L8 5 L11 8 L25 7 L25 28 L3 31 Z" fill="#f0c850" stroke="#c89a20" stroke-width="0.8"/>
<circle cx="19" cy="11" r="9" fill="#c0c4cc" stroke="#6a6e78" stroke-width="0.8"/>
<circle cx="19" cy="11" r="7" fill="#e0f0fc" stroke="#3a70b8" stroke-width="0.6"/>
<path d="M19.5 11 L23.5 7 M19.5 11 L17 12" stroke="#203040" stroke-width="1.6"/><circle cx="19" cy="5" r="0.6" fill="#f06030"/><circle cx="25" cy="11" r="0.6" fill="#f06030"/><circle cx="13" cy="11" r="0.6" fill="#f06030"/>
<path d="M4 16 L31 13 L26 30 L3 31 Z" fill="#fde898" stroke="#c89a20" stroke-width="0.8"/>
</svg>
<div class="lbl" style="left:290px;top:383px">Scheduled<br>Tasks</div>
<svg class="a" style="left:386px;top:345px" width="32" height="32" viewBox="0 0 32 32"><path d="M15 1 C11 4 7 5 2.5 5.5 C2.5 18 6 27 15 32 C24 27 27.5 18 27.5 5.5 C23 5 19 4 15 1 Z" fill="#d8e0f0" stroke="#283060" stroke-width="1.1"/>
<path d="M14.5 4 C11 6.5 8 7.5 4.8 7.8 L4.8 16.8 L14.5 16.8 Z" fill="#f04a10"/>
<path d="M15.5 4 C19 6.5 22 7.5 25.2 7.8 L25.2 16.8 L15.5 16.8 Z" fill="#58b018"/>
<path d="M4.8 16.8 C5.3 22.5 8.5 26.5 14.5 29.5 L14.5 16.8 Z" fill="#1a58d8"/>
<path d="M25.2 16.8 C24.7 22.5 21.5 26.5 15.5 29.5 L15.5 16.8 Z" fill="#f4c400"/>
</svg>
<div class="lbl" style="left:365px;top:383px">Security<br>Center</div>
<svg class="a" style="left:461px;top:345px" width="32" height="32" viewBox="0 0 32 32"><defs><radialGradient id="gsn" cx="35%" cy="35%" r="70%"><stop offset="0" stop-color="#b0b0b4"/><stop offset="0.5" stop-color="#e4e4e8"/><stop offset="1" stop-color="#8a8a90"/></radialGradient>
<radialGradient id="gsd" cx="40%" cy="35%" r="60%"><stop offset="0" stop-color="#f8f8fc"/><stop offset="1" stop-color="#5a5a62"/></radialGradient></defs>
<path d="M1 9 C2 6 6 5 10 5 L14 6 L14 17 L6 18 C3 18 1 15 1 12 Z" fill="#e8e8f0" stroke="#30307a" stroke-width="0.9"/>
<ellipse cx="14.5" cy="14" rx="9.5" ry="11.5" transform="rotate(-25 14.5 14)" fill="#48484c" stroke="#202024" stroke-width="0.8"/>
<ellipse cx="14.5" cy="14.5" rx="7.8" ry="9.6" transform="rotate(-25 14.5 14.5)" fill="url(#gsn)"/>
<circle cx="12" cy="12.5" r="4.3" fill="url(#gsd)" stroke="#6a6ad0" stroke-width="0.8"/>
<path d="M15 29.5 L20 29.5 L28 21 L28 15 M15 26.5 L19 26.5 L25 20 L25.5 16" stroke="#8a8ee8" stroke-width="1.3" fill="none"/>
</svg>
<div class="lbl" style="left:440px;top:383px">Sounds and<br>Audio Devices</div>
<svg class="a" style="left:536px;top:345px" width="32" height="32" viewBox="0 0 32 32"><path d="M10 22 C9 26 11 30 15 30 C19 30 21 27 19 23 Z" fill="#9090d8" stroke="#40408a" stroke-width="0.6"/>
<path d="M7 6 L18 3.5 L22 18 L11 21 Z" fill="#c8cce8" stroke="#6a70a8" stroke-width="0.7"/>
<path d="M8.5 7.5 L17 5.5 L20.5 17 L12 19.5 Z" fill="#50b0f8"/>
<path d="M18 7 C17 2 23 0.5 27 1.5 C31 2.5 32 6 30 9 C28.5 11 25 11.5 23 11 L19.5 15.5 L20.5 10.5 C19 10 18 8.5 18 7 Z" fill="#f8c838" stroke="#a07010" stroke-width="0.7"/>
<path d="M21 5 L28 4.5 M21 7.5 L28 7" stroke="#e0a020" stroke-width="0.8"/>
<path d="M1 30 C1 25 3 23 7 23 C11 23 13 25 13 30 Z" fill="#30a838" stroke="#185818" stroke-width="0.6"/>
<path d="M5.5 23 L7 27 L8.5 23 Z" fill="#fff"/>
<ellipse cx="6.2" cy="17.5" rx="5" ry="5.8" fill="#f8a040" stroke="#a05818" stroke-width="0.6"/>
<path d="M1.3 16 C1 10 11.5 10 11.2 16 C9.5 13.5 3 13.5 1.3 16 Z" fill="#e0b850"/>
</svg>
<div class="lbl" style="left:515px;top:383px">Speech</div>
<svg class="a" style="left:611px;top:345px" width="32" height="32" viewBox="0 0 32 32"><defs><linearGradient id="gss" x1="0" y1="0" x2="0.4" y2="1"><stop offset="0" stop-color="#a0dcff"/><stop offset="1" stop-color="#3a90f0"/></linearGradient></defs>
<path d="M18 4 L27 3 L31 6 L31 27 L23 29 L18 26 Z" fill="#c8cce8" stroke="#6a70a8" stroke-width="0.7"/>
<path d="M18 4 L23 6.5 L23 29 L18 26 Z" fill="#e4e6f6"/>
<path d="M24.5 9 L29.5 8.3 M24.5 12 L29.5 11.3 M24.5 15 L29.5 14.3" stroke="#8a90c0" stroke-width="1"/>
<ellipse cx="10" cy="27" rx="8.5" ry="4" fill="#eceef8" stroke="#7a80b0" stroke-width="0.7"/>
<path d="M6 20 L14 19 L15 26 L6 26.5 Z" fill="#b0b4e0"/>
<path d="M0.5 4.5 L19 2 L19.5 20 L1 23 Z" fill="#c8cce8" stroke="#6a70a8" stroke-width="0.8"/>
<path d="M2.5 6.5 L17.2 4.5 L17.5 18.2 L2.8 20.8 Z" fill="url(#gss)"/>
<path d="M5.5 13 L9 18.5 L14.5 6.5" stroke="#a01010" stroke-width="2" fill="none"/>
</svg>
<div class="lbl" style="left:590px;top:383px">System</div>
<svg class="a" style="left:686px;top:345px" width="32" height="32" viewBox="0 0 32 32"><rect x="0" y="1" width="24.5" height="19" rx="1.5" fill="#1a6ae0"/>
<rect x="1" y="3.5" width="13" height="15" fill="#fff"/>
<path d="M2.5 5.5 L2.5 6.5 M2.5 8.5 L2.5 9.5 M2.5 12.5 L2.5 13.5 M2.5 15.5 L2.5 16.5" stroke="#40a040" stroke-width="1.2"/>
<path d="M5 6 L11 6 M5 8.5 L11 8.5 M5 13 L11 13 M5 15.5 L11 15.5" stroke="#b0c4e8" stroke-width="0.8"/>
<path d="M1 11 L13.5 11" stroke="#f0a020" stroke-width="1.2"/>
<path d="M16.5 5.5 L18 5.5 M16.5 9 L18 9 M16.5 12.5 L18 12.5 M16.5 16 L18 16" stroke="#e0d080" stroke-width="1.4"/>
<rect x="0" y="19" width="30" height="12" rx="1" fill="#2a78e8"/>
<rect x="15" y="20" width="14" height="10" fill="#3a88f0"/>
<rect x="0" y="19" width="15" height="12" rx="1" fill="#2aa02a"/>
<circle cx="6.5" cy="23" r="1.8" fill="#f03010"/><circle cx="9.5" cy="24.5" r="1.8" fill="#60c030"/><circle cx="5.5" cy="26.5" r="1.8" fill="#30a0f0"/><circle cx="8.5" cy="28" r="1.8" fill="#f8c010"/>
</svg>
<div class="lbl" style="left:665px;top:383px">Taskbar and<br>Start Menu</div>
<svg class="a" style="left:236px;top:420px" width="32" height="32" viewBox="0 0 32 32"><path d="M14 26 C14 20 17 17.5 22 17.5 C27 17.5 30.5 20 30.5 26 Z" fill="#30a838" stroke="#1a6020" stroke-width="0.7"/>
<path d="M19.5 17.5 L22 22 L24.5 17.5 Z" fill="#e8f4e8"/>
<ellipse cx="22" cy="10.5" rx="5.8" ry="6.5" fill="#f8a040" stroke="#a05818" stroke-width="0.6"/>
<path d="M16 9.5 C15.5 3 28.5 3 28 9.5 C26 6.5 18 6.5 16 9.5 Z" fill="#d8b050" stroke="#a07818" stroke-width="0.5"/>
<path d="M0.8 27.5 C0.8 21.5 4 19 9.5 19 C15 19 17.5 21.5 17.5 27.5 Z" fill="#2a50e0" stroke="#1a2a80" stroke-width="0.7"/>
<path d="M7 19 L9.5 23 L12 19 Z" fill="#a8d0f8"/>
<path d="M1 13 C0 4 14 3 15 11 C14 14 13 17 10 18 L4 18 C2 17 1 15 1 13 Z" fill="#202020"/>
<ellipse cx="10" cy="13.5" rx="4.8" ry="5.5" fill="#d86018" stroke="#803010" stroke-width="0.5"/>
</svg>
<div class="lbl" style="left:215px;top:458px">User Accounts</div>
<svg class="a" style="left:311px;top:420px" width="32" height="32" viewBox="0 0 32 32"><defs><linearGradient id="gvm" x1="0" y1="0" x2="1" y2="1"><stop offset="0" stop-color="#a4a4a4"/><stop offset="0.5" stop-color="#808080"/><stop offset="1" stop-color="#686868"/></linearGradient></defs>
<rect x="1" y="2" width="29.6" height="29.6" rx="1.2" fill="url(#gvm)"/>
<path d="M2.6 12 L6.6 12 L8.6 18.3 L10.6 12 L14.3 12 L10.6 22.8 L6.6 22.8 Z" fill="#fff"/>
<path d="M16.2 22.8 L16.2 15.5 C16.2 11.8 22 11.8 22 15.5 L22 22.8 M22 15.5 C22 11.8 27.6 11.8 27.6 15.5 L27.6 22.8" stroke="#fff" stroke-width="3.4" fill="none"/>
</svg>
<div class="lbl" style="left:290px;top:458px">VMware Tools</div>
<svg class="a" style="left:386px;top:420px" width="32" height="32" viewBox="0 0 32 32"><defs><radialGradient id="gfw" cx="40%" cy="30%" r="70%"><stop offset="0" stop-color="#a0e0ff"/><stop offset="0.55" stop-color="#2a80e0"/><stop offset="1" stop-color="#0a3a98"/></radialGradient></defs>
<circle cx="12" cy="13" r="11" fill="url(#gfw)"/>
<path d="M5 8 C7 3 14 1 19 3 C20 6 17 9 13 10 L9 13 L6 12 Z" fill="#40b030"/>
<path d="M6 12 L31.5 8.5 L31.5 24 L6 30.5 Z" fill="#d04818" stroke="#201008" stroke-width="1"/>
<path d="M6 12 L31.5 8.5" stroke="#f8d860" stroke-width="1.5"/>
<g stroke="#f8c040" stroke-width="1"><path d="M6.5 18 L31 13.5 M6.5 24 L31 19 M14 11 L14 17 M23 9.8 L23 15.5 M10 17.5 L10 23 M19 16 L19 22 M27.5 14.5 L27.5 20 M14 23 L14 29 M23 21 L23 27"/></g>
</svg>
<div class="lbl" style="left:365px;top:458px">Windows<br>Firewall</div>
<svg class="a" style="left:461px;top:420px" width="32" height="32" viewBox="0 0 32 32"><path d="M1 17 L5 15.5 L21 17 L28 22 L24 23.5 L8 21 Z" fill="#f0f0f4" stroke="#606070" stroke-width="0.7"/>
<path d="M1 17 L8 21 L8 26 L1 21 Z" fill="#c8cae0" stroke="#505468" stroke-width="0.7"/>
<path d="M8 21 L24 23.5 L24 28.5 L8 26 Z" fill="#a8acc8" stroke="#505468" stroke-width="0.7"/>
<path d="M22 22.5 L28 22 L31.5 24.5 L31.5 27.5 L26 29 L22 27 Z" fill="#7a80b8" stroke="#303450" stroke-width="0.7"/>
<path d="M26 25 L30 24.5 L30 27 L26.5 27.5 Z" fill="#d8d8e0"/>
<g stroke="#30c030" stroke-width="1.5" fill="none">
<path d="M15 9.5 C16.5 11 16.5 13 15 14.5"/>
<path d="M18 7.5 C20.5 10 20.5 14 18 16"/>
<path d="M21.5 5.5 C24.5 9 24.5 14 21.5 17"/>
<path d="M25 3.5 C29 8 29 14 25.5 18"/>
</g>
</svg>
<div class="lbl" style="left:440px;top:458px">Wireless<br>Network Set...</div>
<div class="a" style="left:362px;top:115px;width:79px;height:90px;border:3px solid #e63e38"></div>

<div class="a" style="left:0;top:595px;width:796px;height:1px;background:#000"></div>
<div class="a" style="left:795px;top:0;width:1px;height:596px;background:#000"></div>
</body></html>
